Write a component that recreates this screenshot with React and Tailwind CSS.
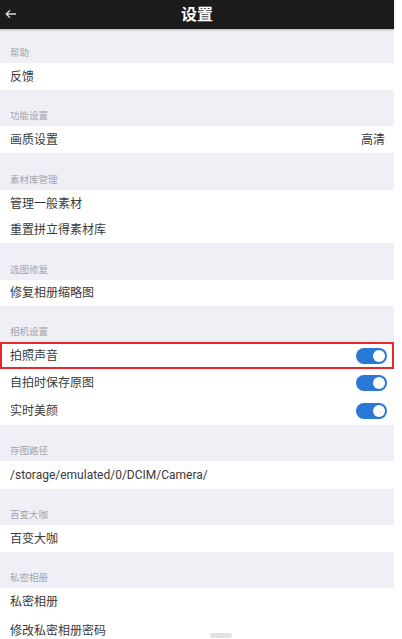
import React from 'react';

const font = { fontFamily: 'Roboto, "Noto Sans CJK SC", sans-serif' };

const Section = ({ title, h = 'h-[36px]' }) => (
  <div className={`${h} bg-[#eef0f6] flex items-end px-[10px] pb-[6px]`}>
    <span className="text-[9.5px] leading-none text-[#a4a4ac]">{title}</span>
  </div>
);

const Toggle = () => (
  <div className="w-[31px] h-[16px] rounded-full bg-[#2a78d6] flex items-center justify-end pr-[2px]">
    <div className="w-[12px] h-[12px] rounded-full bg-white" />
  </div>
);

const Row = ({ label, value, toggle, highlight, h = 'h-[27px]' }) => (
  <div className={`${h} bg-white flex items-center justify-between pl-[10px] pr-[7px] ${highlight ? 'outline-2 outline-[#e8262b] -outline-offset-2' : ''}`}>
    <span className="text-[12px] leading-none text-[#3a3a3a]">{label}</span>
    {value && <span className="text-[12px] leading-none text-[#3a3a3a] mr-[2px]">{value}</span>}
    {toggle && <Toggle />}
  </div>
);

export default function App() {
  return (
    <div className="w-[402px] h-[639px] bg-white overflow-hidden relative" style={font}>
      <div className="w-[394px] flex flex-col">
        <div className="h-[29px] bg-[#1b1b1b] flex items-center relative shadow-[0_1px_2px_rgba(0,0,0,0.25)]">
          <svg className="absolute left-[5px] top-[9px]" width="12" height="10" viewBox="0 0 12 10" fill="none" stroke="#d8d8d8" strokeWidth="1.3">
            <path d="M11 5H1.5M5 1.2L1.2 5L5 8.8" />
          </svg>
          <span className="flex-1 text-center text-white text-[16px] font-bold leading-none">设置</span>
        </div>
        <Section title="帮助" h="h-[34px]" />
        <Row label="反馈" />
        <Section title="功能设置" />
        <Row label="画质设置" value="高清" />
        <Section title="素材库管理" h="h-[37px]" />
        <Row label="管理一般素材" />
        <Row label="重置拼立得素材库" h="h-[26px]" />
        <Section title="选图修复" h="h-[37px]" />
        <Row label="修复相册缩略图" h="h-[26px]" />
        <Section title="相机设置" />
        <Row label="拍照声音" toggle highlight />
        <Row label="自拍时保存原图" toggle h="h-[28px]" />
        <Row label="实时美颜" toggle h="h-[28px]" />
        <Section title="存图路径" />
        <Row label="/storage/emulated/0/DCIM/Camera/" h="h-[28px]" />
        <Section title="百变大咖" />
        <Row label="百变大咖" />
        <Section title="私密相册" />
        <Row label="私密相册" h="h-[28px]" />
        <Row label="修改私密相册密码" h="h-[29px]" />
      </div>
      <div className="absolute left-[210px] top-[633px] w-[22px] h-[5px] rounded-full bg-[#d6d6d6] opacity-70" />
    </div>
  );
}
